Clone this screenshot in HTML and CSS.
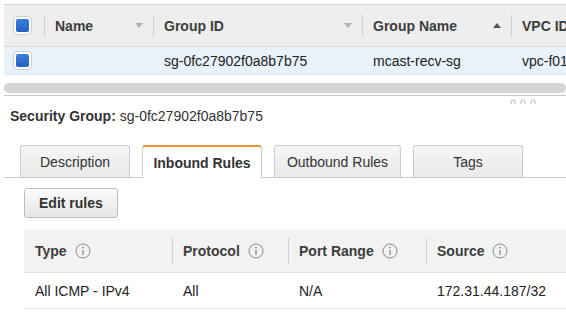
FILE: index.html
```html
<!DOCTYPE html>
<html lang="en">
<head>
    <meta charset="UTF-8">
    <title>Security Groups</title>
    <link rel="stylesheet" href="styles.css">
</head>
<body>
    <div class="list">
        <div class="list-row list-head">
            <div class="cell check-cell"><span class="check"></span></div>
            <div class="cell">Name<span class="sort down"></span></div>
            <div class="cell">Group ID<span class="sort down"></span></div>
            <div class="cell">Group Name<span class="sort up"></span></div>
            <div class="cell">VPC ID</div>
        </div>
        <div class="list-row list-sel">
            <div class="cell check-cell"><span class="check"></span></div>
            <div class="cell"></div>
            <div class="cell">sg-0fc27902f0a8b7b75</div>
            <div class="cell">mcast-recv-sg</div>
            <div class="cell">vpc-f01a2b3c</div>
        </div>
        <div class="scroll"><div class="thumb"></div></div>
    </div>

    <div class="grip">
        <svg width="30" height="6" viewBox="0 0 30 6"><path d="M1 5V3a2 2 0 0 1 4 0v2M11 5V3a2 2 0 0 1 4 0v2M21 5V3a2 2 0 0 1 4 0v2" fill="none" stroke="#b5b5b5" stroke-width="1"/></svg>
    </div>

    <p class="title"><b>Security Group:</b> sg-0fc27902f0a8b7b75</p>

    <div class="tabs">
        <div class="tab tab-desc">Description</div>
        <div class="tab tab-in active">Inbound Rules</div>
        <div class="tab tab-out">Outbound Rules</div>
        <div class="tab tab-tags">Tags</div>
    </div>

    <div class="panel">
        <button class="btn">Edit rules</button>
        <div class="rules">
            <div class="rules-row rules-head">
                <div class="rc">Type <svg class="info" width="16" height="16" viewBox="0 0 16 16"><circle cx="8" cy="8" r="7" fill="none" stroke="#8a8a8a"/><circle cx="8" cy="4.6" r="0.9" fill="#8a8a8a"/><path d="M8 7v5" stroke="#8a8a8a" stroke-width="1.3"/></svg></div>
                <div class="rc">Protocol <svg class="info" width="16" height="16" viewBox="0 0 16 16"><circle cx="8" cy="8" r="7" fill="none" stroke="#8a8a8a"/><circle cx="8" cy="4.6" r="0.9" fill="#8a8a8a"/><path d="M8 7v5" stroke="#8a8a8a" stroke-width="1.3"/></svg></div>
                <div class="rc">Port Range <svg class="info" width="16" height="16" viewBox="0 0 16 16"><circle cx="8" cy="8" r="7" fill="none" stroke="#8a8a8a"/><circle cx="8" cy="4.6" r="0.9" fill="#8a8a8a"/><path d="M8 7v5" stroke="#8a8a8a" stroke-width="1.3"/></svg></div>
                <div class="rc">Source <svg class="info" width="16" height="16" viewBox="0 0 16 16"><circle cx="8" cy="8" r="7" fill="none" stroke="#8a8a8a"/><circle cx="8" cy="4.6" r="0.9" fill="#8a8a8a"/><path d="M8 7v5" stroke="#8a8a8a" stroke-width="1.3"/></svg></div>
            </div>
            <div class="rules-row">
                <div class="rc">All ICMP - IPv4</div>
                <div class="rc">All</div>
                <div class="rc">N/A</div>
                <div class="rc">172.31.44.187/32</div>
            </div>
        </div>
    </div>
</body>
</html>
```

FILE: styles.css
```css
body { margin: 0; font-family: "Liberation Sans", Arial, sans-serif; font-size: 14px; color: #222; overflow: hidden; width: 566px; }
.list { padding: 4px 0 0 4px; }
.list-row { display: grid; grid-template-columns: 40px 109px 209px 149px 200px; width: 707px; }
.list-head { background: #eeeeee; border-top: 1px solid #d6d6d6; border-bottom: 1px solid #d9d9d9; height: 41px; font-weight: 700; color: #3d3d3d; }
.list-sel { background: #e9f1fb; height: 27px; border-bottom: 1px solid #e2e8ef; }
.cell { display: flex; align-items: center; padding: 0 10px 0 11px; background: linear-gradient(#cfcfcf, #cfcfcf) left center / 1px 22px no-repeat; }
.list-sel .cell { background: none; }
.check-cell { background: none; padding-left: 10px; }
.check { width: 13px; height: 13px; border: 2px solid #fff; outline: 1px solid #cfcfcf; border-radius: 4px; background: linear-gradient(#3b7fdc, #2461c4); box-shadow: 0 0 0 1px #e4e4e4; }
.sort { margin-left: auto; width: 0; height: 0; border-left: 4px solid transparent; border-right: 4px solid transparent; }
.sort.down { border-top: 5px solid #b0b0b0; }
.sort.up { border-bottom: 5px solid #555; }
.scroll { margin-top: 7px; padding: 1px 0 2px; background: #fafafa; border-bottom: 1px solid #c9c9c9; }
.thumb { height: 10px; border-radius: 5px; background: #d5d5d5; }
.grip { display: flex; justify-content: flex-end; padding: 3px 26px 0 0; height: 6px; }
.title { margin: 3px 0 0 10px; color: #333; }
.title b { color: #333; }
.tabs { display: flex; gap: 12px; margin: 21px 0 0 4px; padding-left: 16px; border-bottom: 1px solid #c9c9c9; height: 32px; align-items: flex-end; }
.tab { box-sizing: border-box; height: 32px; display: flex; align-items: center; justify-content: center; color: #333; background: linear-gradient(#f6f6f6, #e9e9e9); border: 1px solid #cdcdcd; border-bottom: none; border-radius: 3px 3px 0 0; }
.tab-desc { width: 110px; }
.tab-in { width: 120px; }
.tab-out { width: 127px; }
.tab-tags { width: 110px; }
.tab.active { height: 33px; margin-bottom: -1px; background: #fff; border-top: 2px solid #eb962f; font-weight: 700; color: #333; }
.panel { padding: 10px 0 0 24px; }
.btn { font: 700 14px "Liberation Sans", Arial, sans-serif; color: #333; height: 30px; padding: 0 14px; border: 1px solid #bdbdbd; border-radius: 3px; background: linear-gradient(#fbfbfb, #e6e6e6); }
.rules { margin-top: 12px; }
.rules-row { display: grid; grid-template-columns: 148px 116px 138px 200px; width: 602px; border-bottom: 1px solid #e0e0e0; height: 35px; }
.rules-head { background: #f2f2f2; height: 42px; font-weight: 700; color: #3d3d3d; }
.rc { display: flex; align-items: center; gap: 6px; padding-left: 11px; }
.rules-head .rc + .rc { background: linear-gradient(#cfcfcf, #cfcfcf) left center / 1px 26px no-repeat; }
.info { margin-left: 2px; }
```
